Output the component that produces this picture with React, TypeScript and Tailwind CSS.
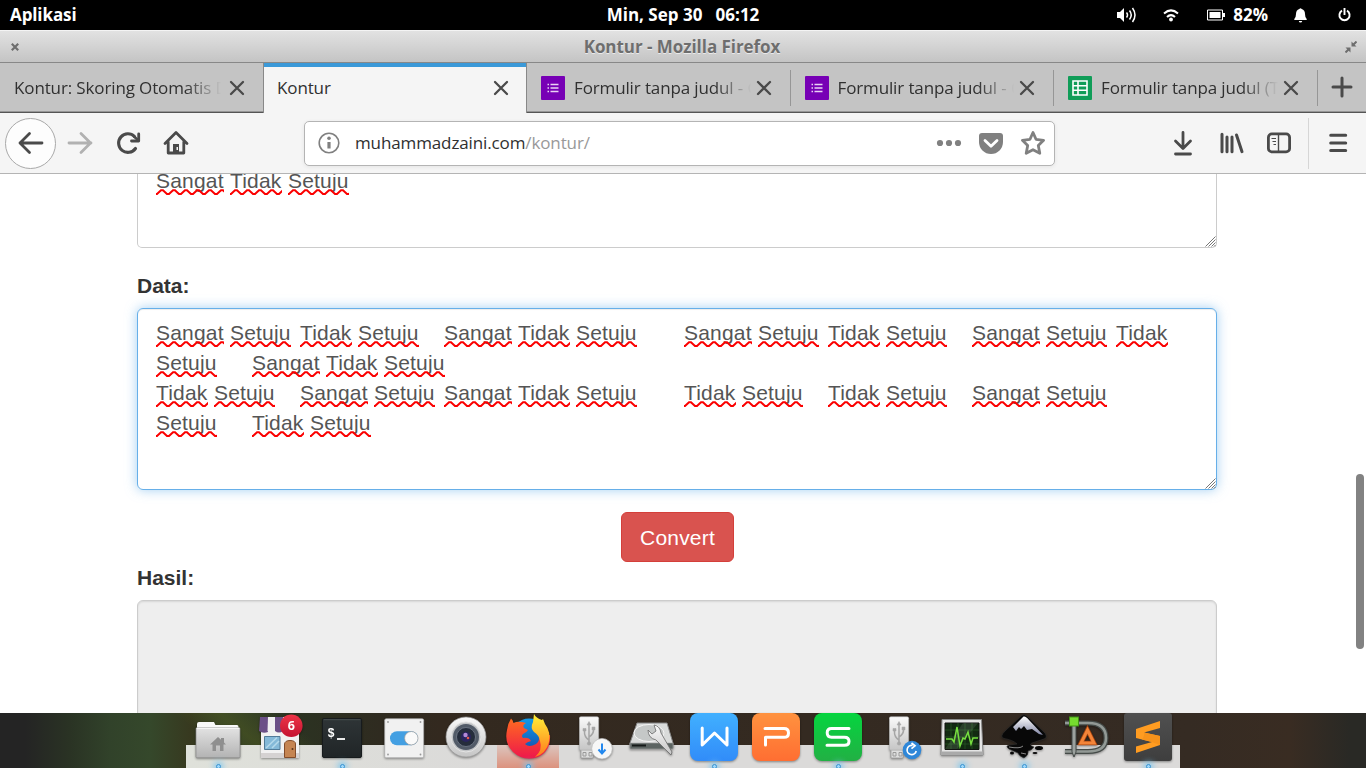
import React from "react";

const WAVE_WIDTH: Record<string, number> = { Sangat: 68, Setuju: 61, Tidak: 52 };

function wave(width: number) {
  let d = "M0 5";
  for (let x = 0; x < width; x += 12) {
    d += `L${x + 1} 5L${x + 5} 1.2L${x + 7} 1.2L${x + 11} 5L${x + 12} 5`;
  }
  return d;
}

function Word({ text }: { text: string }) {
  const w = WAVE_WIDTH[text];
  return (
    <span className="relative inline-block" style={{ width: w }}>
      {text}
      <svg className="absolute top-[23px] left-0" width={w} height="6" fill="none" stroke="#fb0000" strokeWidth="2">
        <path d={wave(w)} />
      </svg>
    </span>
  );
}

function Line({ text }: { text: string }) {
  return (
    <div className="h-[30px] whitespace-pre [tab-size:48px] tracking-[0.2px]">
      {text.split(/([ \t]+)/).map((part, i) =>
        WAVE_WIDTH[part] ? <Word key={i} text={part} /> : (
          <span key={i} className="tracking-[0.16px]">{part}</span>
        )
      )}
    </div>
  );
}

const DATA_LINES = [
  "Sangat Setuju\tTidak Setuju\tSangat Tidak Setuju\tSangat Setuju\tTidak Setuju\tSangat Setuju\tTidak",
  "Setuju\tSangat Tidak Setuju",
  "Tidak Setuju\tSangat Setuju\tSangat Tidak Setuju\tTidak Setuju\tTidak Setuju\tSangat Setuju",
  "Setuju\tTidak Setuju",
];

function Grip() {
  return (
    <svg className="absolute right-0 bottom-0" width="11" height="11" stroke="#777" strokeWidth="1">
      <path d="M0.5 10.5L10.5 0.5M3.5 10.5L10.5 3.5M6.5 10.5L10.5 6.5M9 10.5L10.5 9" />
    </svg>
  );
}

function TopPanel() {
  return (
    <header className="grid h-[30px] shrink-0 grid-cols-3 items-center bg-black pr-[15px] pl-[10px] text-[17px] font-bold text-white">
      <span className="-mt-px tracking-[-0.1px]">Aplikasi</span>
      <span className="-mt-px pl-[5px] text-center whitespace-pre">Min, Sep 30   06:12</span>
      <div className="flex items-center justify-end">
        <svg width="20" height="18" viewBox="0 0 20 18" fill="none" stroke="#fff" strokeWidth="1.5">
          <path d="M0 6H3L7 2V16L3 12H0Z" fill="#fff" stroke="none" />
          <path d="M9.5 6.5Q11.5 9 9.5 11.5M12.5 4.5Q16 9 12.5 13.5M15.5 2Q20.5 9 15.5 16" />
        </svg>
        <svg className="ml-[26px]" width="16" height="13" viewBox="0 0 16 13" fill="none" stroke="#fff" strokeWidth="2">
          <path d="M1 4.5Q8 -1.8 15 4.5M4 8Q8 4.2 12 8" />
          <circle cx="8" cy="10.5" r="1.9" fill="#fff" stroke="none" />
        </svg>
        <svg className="ml-[28px]" width="19" height="12" viewBox="0 0 19 12">
          <path d="M.5 1H15.5V11H.5Z" fill="none" stroke="#fff" />
          <path d="M2.5 3H13.5V9H2.5ZM16 4H18V8H16Z" fill="#fff" />
        </svg>
        <span className="-mt-px ml-[7px]">82%</span>
        <svg className="ml-[26px]" width="13" height="15" viewBox="0 0 13 15" fill="#fff">
          <path d="M5.3 1Q6.5 -.6 7.7 1Q11 2 11 6Q11 9.5 12.7 11V12H.3V11Q2 9.5 2 6Q2 2 5.3 1ZM4.8 13H8.2Q8 14.6 6.5 14.6Q5 14.6 4.8 13Z" />
        </svg>
        <svg className="ml-[31px]" width="13" height="14" viewBox="0 0 13 14" fill="none" stroke="#fff" strokeWidth="1.9">
          <path d="M4 2.7A5.1 5.1 0 1 0 9 2.7M6.5 0V7" />
        </svg>
      </div>
    </header>
  );
}

function Close() {
  return (
    <svg className="shrink-0 overflow-visible" width="14" height="14" viewBox="0 0 14 14" stroke="#4a4a4a" strokeWidth="2.3" strokeLinecap="round">
      <path d="M1 1L13 13M13 1L1 13" />
    </svg>
  );
}

function FormIcon() {
  return (
    <svg className="mr-[9px] shrink-0" width="24" height="24">
      <rect width="24" height="24" rx="1" fill="#7700b5" />
      <path d="M9.5 8.5H17.5M9.5 12H17.5M9.5 15.5H17.5" stroke="#e9d3f4" strokeWidth="1.3" />
      <path d="M6.5 8.5H8M6.5 12H8M6.5 15.5H8" stroke="#e9d3f4" strokeWidth="1.4" />
    </svg>
  );
}

function SheetIcon() {
  return (
    <svg className="mr-[9px] shrink-0" width="24" height="24">
      <rect width="24" height="24" rx="1" fill="#109d58" />
      <path d="M5 5H19V19H5ZM5 9.7H19M5 14.3H19M10 5V19" stroke="#fff" strokeWidth="1.6" fill="none" />
    </svg>
  );
}

function Tab({ title, icon, divider }: { title: string; icon?: React.ReactNode; divider?: boolean }) {
  return (
    <div className={divider ? "flex h-full w-[263.5px] shrink-0 items-center border-b border-[#555] pl-[14px]" : "flex h-full w-[263px] shrink-0 items-center border-b border-[#555] pl-[14px]"}>
      {icon}
      <div className="min-w-0 flex-1 whitespace-nowrap [mask-image:linear-gradient(to_right,#000_calc(100%_-_37px),transparent_calc(100%_-_1px))]">{title}</div>
      <div className={divider ? "ml-[5px] flex h-[36px] w-[34px] items-center" : "ml-[8px] flex h-[36px] w-[33px] items-center"}>
        <Close />
        {divider && <div className="ml-auto h-full w-px bg-[#969696]" />}
      </div>
    </div>
  );
}

function TabStrip() {
  return (
    <div className="flex h-[50px] shrink-0 bg-[#c4c4c4] text-[17px] tracking-[-0.13px] text-[#303030] shadow-[inset_0_-2px_#969696]">
      <Tab title="Kontur: Skoring Otomatis D" />
      <div className="flex h-full w-[264px] shrink-0 items-center border-x border-[#888] bg-[#f5f5f5] pr-[18px] pl-[13px] shadow-[inset_0_4px_#3b99d8]">
        <span className="flex-1">Kontur</span>
        <Close />
      </div>
      <Tab title="Formulir tanpa judul - G" icon={<FormIcon />} divider />
      <Tab title="Formulir tanpa judul - G" icon={<FormIcon />} divider />
      <Tab title="Formulir tanpa judul (T" icon={<SheetIcon />} divider />
      <div className="flex flex-1 items-center border-b border-[#555] pl-[13px]">
        <svg className="-mt-[2px]" width="22" height="22" stroke="#4a4a4a" strokeWidth="3" strokeLinecap="round">
          <path d="M2 11H20M11 2V20" />
        </svg>
      </div>
    </div>
  );
}

function NavBar() {
  return (
    <nav className="flex h-[61px] shrink-0 items-center border-b border-[#b4b4b4] bg-[#f5f5f5] pl-[5px]">
      <div className="flex size-[51px] shrink-0 items-center justify-center rounded-full border border-[#a9a9a9] bg-[#fdfdfd]">
        <svg width="26" height="24" fill="none" stroke="#4a4a4a" strokeWidth="2.8" strokeLinecap="round" strokeLinejoin="round">
          <path d="M24 12H2M11.5 2.5L2 12L11.5 21.5" />
        </svg>
      </div>
      <svg className="ml-[11px]" width="26" height="24" fill="none" stroke="#b1b1b1" strokeWidth="2.8" strokeLinecap="round" strokeLinejoin="round">
        <path d="M2 12H24M14 2.5L23.5 12L14 21.5" />
      </svg>
      <svg className="ml-[23px]" width="26" height="24" fill="none" stroke="#4a4a4a" strokeWidth="3.1" strokeLinecap="round">
        <path d="M19.500 17.500A9.300 9.300 0 1 1 18.500 5.500" />
        <path d="M15.500 10H22.700V3" strokeWidth="2.800" strokeLinejoin="round" />
        <path d="M18 5.500L22.500 9.500" strokeWidth="2.500" />
      </svg>
      <svg className="ml-[21px]" width="26" height="26" fill="none" stroke="#4a4a4a" strokeWidth="2.8" strokeLinecap="round" strokeLinejoin="round">
        <path d="M2 13.5L13 2.5L24 13.5M5.2 12V23H20.8V12" />
        <path d="M10 14H16V23H10Z" fill="#4a4a4a" stroke="none" />
        <path d="M13.500 17H15V20H13.500Z" fill="#f5f5f5" stroke="none" />
      </svg>
      <div className="ml-[115px] flex h-[45px] w-[751px] items-center rounded-[5px] border border-[#b4b4b4] bg-white pr-[8px] pl-[13px] shadow-[0_1px_4px_rgba(0,0,0,0.07)]">
        <svg width="22" height="22" fill="none" stroke="#808080" strokeWidth="1.6">
          <circle cx="11" cy="11" r="9.8" />
          <path d="M11 10V16.5" strokeWidth="3.2" />
          <circle cx="11" cy="6.3" r="1.8" fill="#808080" stroke="none" />
        </svg>
        <span className="ml-[15px] flex-1 text-[17px] tracking-[-0.12px] text-[#303030]">
          muhammadzaini.com<span className="text-[#999]">/kontur/</span>
        </span>
        <svg width="26" height="8" fill="#808080">
          <circle cx="4" cy="4" r="3.1" /><circle cx="13" cy="4" r="3.1" /><circle cx="22" cy="4" r="3.1" />
        </svg>
        <svg className="ml-[17px]" width="24" height="21" viewBox="0 0 24 21">
          <path d="M3 0H21Q24 0 24 3V9A12 12 0 0 1 0 9V3Q0 0 3 0Z" fill="#808080" />
          <path d="M6 7.500L12 13.300L18 7.500" fill="none" stroke="#fff" strokeWidth="2.8" strokeLinecap="round" strokeLinejoin="round" />
        </svg>
        <svg className="ml-[17px]" width="26" height="26" viewBox="0 0 26 26" fill="none" stroke="#808080" strokeWidth="2.8" strokeLinejoin="round">
          <path d="M13 2.5L16 9.300L23.6 10.3L18.300 15.5L19.8 23.3L13 19.700L6.2 23.3L7.700 15.5L2.4 10.3L10 9.3Z" />
        </svg>
      </div>
      <svg className="ml-[118px]" width="20" height="26" fill="none" stroke="#4a4a4a" strokeWidth="2.8" strokeLinecap="round" strokeLinejoin="round">
        <path d="M10 2.5V18M2.5 11L10 18.5L17.5 11M2.5 24H17.5" />
      </svg>
      <svg className="ml-[27px]" width="24" height="22" fill="none" stroke="#4a4a4a" strokeWidth="3" strokeLinecap="round">
        <path d="M2 2.3V19.7M7 5V19.7M12 5V19.7M16.5 3L22 19.7" />
      </svg>
      <svg className="ml-[23px]" width="24" height="22" fill="none" stroke="#4a4a4a">
        <rect x="1.4" y="1.9" width="21.2" height="18" rx="3.5" strokeWidth="2.8" />
        <path d="M11.5 2V20" strokeWidth="1.4" />
        <path d="M4.5 6.5H9M5.5 9.5H9M6.5 12.5H9" strokeWidth="1.2" />
      </svg>
      <div className="ml-[17px] h-[51px] w-px bg-[#d6d6d6]" />
      <svg className="ml-[20px]" width="19" height="20" stroke="#4a4a4a" strokeWidth="3" strokeLinecap="round">
        <path d="M1.700 2.300H16.700M1.700 10H16.700M1.700 17.500H16.700" />
      </svg>
    </nav>
  );
}

function Page() {
  return (
    <main className="relative min-h-0 flex-1 overflow-hidden bg-white px-[137px] font-['Liberation_Sans',sans-serif] text-[21px] leading-[30px] text-[#333]">
      <div className="relative flex h-[74px] w-[1080px] flex-col rounded-b-[5px] border border-t-0 border-[#ccc] px-[18px] text-[#555]">
        <div className="-mt-[8px]"><Line text="Sangat Tidak Setuju" /></div>
        <Grip />
      </div>
      <div className="mt-[23px] mb-[7px] font-bold">Data:</div>
      <div className="relative h-[182px] w-[1080px] rounded-[6px] border border-[#66afe9] px-[18px] py-[9px] text-[#555] shadow-[inset_0_1px_1px_rgba(0,0,0,0.075),0_0_12px_rgba(102,175,233,0.6)]">
        {DATA_LINES.map((line, i) => <Line key={i} text={line} />)}
        <Grip />
      </div>
      <button className="mt-[22px] ml-[484px] block h-[50px] w-[113px] rounded-[6px] border border-[#d43f3a] bg-[#d9534f] pt-[2px] tracking-[0.2px] text-white">Convert</button>
      <div className="mt-[1px] mb-[7px] font-bold">Hasil:</div>
      <div className="h-[182px] w-[1080px] rounded-[6px] border border-[#ccc] bg-[#eee] shadow-[inset_0_1px_2px_rgba(0,0,0,0.1)]" />
      <div className="absolute top-[300px] right-[2px] h-[175px] w-[8px] rounded-full bg-[#828282]" />
    </main>
  );
}

function Usb({ children }: { children: React.ReactNode }) {
  return (
    <>
      <path d="M22 36H34V45H22Z" fill="#dedede" stroke="#999" strokeWidth=".8" />
      <path d="M24 39.5H27V43H24ZM30 39.5H33V43H30Z" fill="#ddd" stroke="#999" />
      <rect x="20.3" y="3.7" width="19.4" height="33.5" rx="1.5" fill="url(#metal)" stroke="#aaa" strokeWidth=".6" />
      <g stroke="#a6a6a6" strokeWidth="1.5" fill="none">
        <path d="M30 11V30M30 27Q25 24 25.5 18M30 24Q35 21 34.5 16" />
        <path d="M30 8.5L32 12H28ZM24 15.5H27V18H24ZM33 14H36V17H33Z" fill="#a6a6a6" strokeWidth=".5" />
        <circle cx="30" cy="30.5" r="1.8" fill="#a6a6a6" strokeWidth=".3" />
      </g>
      {children}
    </>
  );
}

const ICONS: { running?: boolean; active?: boolean; art: React.ReactNode }[] = [
  {
    running: true,
    art: (
      <>
        <path d="M10 17V11Q10 9 12 9H27L28.5 12H50Q51.5 12 51.5 14V17Z" fill="#f8f8f8" />
        <rect x="9" y="14.8" width="44" height="30" rx="1" fill="url(#folder)" stroke="#888" strokeWidth=".7" />
        <path d="M9.5 15.3H52.5" stroke="#fff" />
        <path d="M23 31.5L31 24L34 26.7V25H37V29.5L39 31.5H36.5V38H33V32.5H29V38H25.5V31.5Z" fill="#8f8f8f" />
      </>
    ),
  },
  {
    art: (
      <>
        <path d="M12 17H50V44.7H12Z" fill="#f1f1f1" />
        <path d="M12 40H50V44.7H12Z" fill="#d5d2d2" />
        <path d="M11 4H19V19Q14 21 10 18Z" fill="#6b5087" /><path d="M19 4H26V18Q22 22 18.500 18Z" fill="#f0f0f0" />
        <path d="M26 4H34V18Q30 21 26 18Z" fill="#6b5087" /><path d="M34 4H42V18H34Z" fill="#eee" /><path d="M42 4H49L50 18H42Z" fill="#6b5087" />
        <path d="M15.500 23.500H31V36.500H15.500Z" fill="#84b9d8" stroke="#527b98" />
        <path d="M17 35L28 24.500M23 35L30 28" stroke="#b4d9eb" strokeWidth="1.5" />
        <path d="M35.500 44.500V31Q36 27.500 41 27.500Q46.500 27.500 46.500 31V44.500Z" fill="#c58552" stroke="#834d2b" /><circle cx="43.500" cy="36" r="1" fill="#58341e" />
        <circle cx="42.300" cy="12.700" r="11.300" fill="url(#badge)" />
        <text x="42.300" y="17.200" textAnchor="middle" fill="#fff" fontSize="12.500" fontWeight="700">6</text>
      </>
    ),
  },
  {
    running: true,
    art: (
      <>
        <rect x="11.500" y="5.500" width="39" height="39" rx="1.500" fill="url(#term)" stroke="#171b1d" />
        <path d="M12.500 6.700H49.500" stroke="#5b6265" strokeWidth=".6" />
        <text x="16.500" y="23.500" fill="#fff" fontSize="12" fontWeight="700" className="font-['Liberation_Mono',monospace]">$</text>
        <path d="M26 26H34" stroke="#fff" strokeWidth="1.800" />
      </>
    ),
  },
  {
    art: (
      <>
        <rect x="11.700" y="5.700" width="39" height="39" rx="1.500" fill="#f1f1f1" stroke="#aaa" strokeWidth=".7" />
        <g fill="#999"><circle cx="15" cy="9" r=".9" /><circle cx="47.500" cy="9" r=".9" /><circle cx="15" cy="41.500" r=".9" /><circle cx="47.500" cy="41.500" r=".9" /></g>
        <rect x="17" y="18.200" width="28" height="14" rx="7" fill="#439fe2" />
        <circle cx="38.300" cy="25.200" r="6.700" fill="#fafafa" stroke="#999" strokeWidth=".7" />
      </>
    ),
  },
  {
    art: (
      <>
        <circle cx="31" cy="24" r="20" fill="url(#metal)" stroke="#999" strokeWidth=".7" />
        <circle cx="31" cy="24" r="15" fill="#c2c4c6" stroke="#e4e4e4" />
        <circle cx="31" cy="24" r="13" fill="#525b68" /><circle cx="31" cy="24" r="9.500" fill="#252d3c" stroke="#7b8492" strokeWidth=".7" />
        <circle cx="31" cy="24" r="5" fill="#29245f" /><circle cx="30.500" cy="22" r="2.200" fill="#b18ad6" /><circle cx="33" cy="25" r="1.300" fill="#e6574b" />
      </>
    ),
  },
  {
    running: true,
    active: true,
    art: (
      <>
        <circle cx="32" cy="24" r="18.500" fill="url(#globe)" />
        <path d="M14 5.500Q16 7 16.500 10Q20 8 25 9L29 10Q25 12 27 15L31 17Q30 19 26 21Q24 23 26 25Q32 24 34 28Q30 29 28 31Q32 35 39 31Q43 28 42 23L53 22Q54 38 41 44Q27 49 16 39Q7 30 10 17Q11 10 14 5.500Z" fill="url(#fox)" />
        <path d="M37 1Q39 5 45 7L46 6L48 11Q54 19 52 29Q49 41 38 44Q46 37 43 28Q42 22 37 19Q33 15 36 9Z" fill="url(#flame)" />
      </>
    ),
  },
  {
    art: (
      <Usb>
        <circle cx="43" cy="35.700" r="10.300" fill="#f7f7f7" stroke="#bbb" strokeWidth=".7" />
        <path d="M43 30.500V40M39.500 36.500L43 40.500L46.500 36.500" fill="none" stroke="#2388ee" strokeWidth="2" />
      </Usb>
    ),
  },
  {
    art: (
      <>
        <path d="M16 10H46L52 30V35H9V30Z" fill="#d9dbda" stroke="#868686" />
        <path d="M9 30H52V36H9Z" fill="#5c6462" stroke="#aaa" strokeWidth=".6" />
        <path d="M11 32.500H25" stroke="#151a19" strokeWidth="2" />
        <ellipse cx="28" cy="20" rx="15" ry="8.500" fill="#c5c8c7" stroke="#f4f4f4" />
        <path d="M27 17L31 21L35 18L33 12Q39 13 40 20L51 39L50 42L35 27Q27 25 27 17Z" fill="url(#metal)" stroke="#6b6b6b" strokeWidth=".8" />
      </>
    ),
  },
  {
    running: true,
    art: (
      <>
        <rect x="7" width="48" height="48" rx="8" fill="url(#wblue)" />
        <path d="M19.200 15V32L31.500 20L44 32V15" fill="none" stroke="#fff" strokeWidth="3" strokeLinecap="round" strokeLinejoin="round" />
      </>
    ),
  },
  {
    art: (
      <>
        <rect x="7" width="48" height="48" rx="8" fill="url(#porange)" />
        <path d="M20 15.500H39Q43.500 15.500 43.500 19.900Q43.500 24.300 39 24.300H20.500V32" fill="none" stroke="#fff" strokeWidth="3" strokeLinecap="round" strokeLinejoin="round" />
      </>
    ),
  },
  {
    running: true,
    art: (
      <>
        <rect x="7" width="48" height="48" rx="8" fill="url(#sgreen)" />
        <path d="M42 15.500H24.500Q20.200 15.500 20.200 19.800Q20.200 24.200 24.500 24.200H37.500Q42 24.200 42 28.300Q42 32.300 37.500 32.300H20" fill="none" stroke="#fff" strokeWidth="3" strokeLinecap="round" />
      </>
    ),
  },
  {
    art: (
      <Usb>
        <circle cx="43" cy="37" r="9.300" fill="#2f87d8" />
        <path d="M47.200 38A4.600 4.600 0 1 1 43.500 32.500M42.500 30L46 32.800L42.500 35.600" fill="none" stroke="#fff" strokeWidth="1.700" />
      </Usb>
    ),
  },
  {
    running: true,
    art: (
      <>
        <path d="M10 42L11 6.500H50.500L52 42Z" fill="#e5e5e5" stroke="#888" />
        <path d="M10 38.500H52V42H10Z" fill="#aaa" />
        <path d="M14 10H48V36.500H14Z" fill="#122a12" stroke="#111" />
        <path d="M14 17H48M14 24H48M14 31H48M20 10V36M27 10V36M34 10V36M41 10V36" stroke="#285926" strokeWidth=".7" />
        <path d="M32 10H47L26 36H14Z" fill="#fff" opacity=".1" />
        <path d="M15 26H21L23 29L26 14L29 33L32 25L34 26L37 19L40 31L42 25H47" fill="none" stroke="#76df3f" strokeWidth="1.500" />
      </>
    ),
  },
  {
    running: true,
    art: (
      <>
        <path d="M31 1.500Q33 2 36 5L52 20Q55 25 51 26L39 30Q35 32 41 34Q39 37 35 38Q36 42 31 45Q26 43 25 40L16 36Q12 33 16 32L24 31Q20 27 11 25.500Q6 24 12 18L26 5Q29 2 31 1.500Z" fill="#080808" stroke="#333" strokeWidth=".6" />
        <path d="M30.500 3.500L20 14L23 18L26 14L28 16L31 13L34 17L39 16L46 21L50 22L36 7Q33 3 30.500 3.500Z" fill="url(#peak)" />
        <path d="M16 34Q27 36 30 33M28 40L33 41" stroke="#888" strokeWidth="1" fill="none" />
        <ellipse cx="46" cy="35" rx="4" ry="2" fill="#080808" /><ellipse cx="19" cy="40" rx="2" ry="1.500" fill="#080808" /><ellipse cx="42" cy="40" rx="2.500" ry="1" fill="#080808" />
      </>
    ),
  },
  {
    art: (
      <>
        <path d="M10 10H33Q51 10 51 25Q51 38.500 33 38.500H10" fill="none" stroke="#454b48" strokeWidth="5" />
        <path d="M10 10H33Q51 10 51 25Q51 38.500 33 38.500H10" fill="none" stroke="#929995" strokeWidth="2.600" />
        <path d="M17 10H21V39L19 44L17 39Z" fill="#9ba19e" stroke="#454b48" />
        <path d="M32.500 17L39 30H26Z" fill="none" stroke="#a84510" strokeWidth="4.600" />
        <path d="M32.500 17L39 30H26Z" fill="none" stroke="#f48539" strokeWidth="3" />
        <rect x="14.500" y="4" width="9" height="9" fill="#76dc2f" stroke="#429316" />
      </>
    ),
  },
  {
    running: true,
    art: (
      <>
        <rect x="7" width="48" height="48" rx="3" fill="url(#subl)" />
        <path d="M43 8L19 16V25L35 29L19 33.500V40L43 32V23L27 19.500L43 15Z" fill="#ff9c21" />
        <path d="M27 19.500L43 23V32L35 29L25 26.500Q28 22 27 19.500Z" fill="#f7931b" />
      </>
    ),
  },
];

function Gradient({ id, from, to }: { id: string; from: string; to: string }) {
  return (
    <linearGradient id={id} x1="0" y1="0" x2="0" y2="1">
      <stop stopColor={from} />
      <stop offset="1" stopColor={to} />
    </linearGradient>
  );
}

function Dock() {
  return (
    <footer className="relative flex h-[55px] shrink-0 justify-center bg-[linear-gradient(38deg,transparent_150px,rgba(76,88,30,0.55)_178px,transparent_215px),linear-gradient(90deg,#242424_25px,#2a3324_70px,#31422a_110px,#35482b_150px,#37391f_190px,#34412a_225px,#2b3322_290px,#2f2b20_380px,#33291f_440px,#352b23_1190px,#392c22_1290px,#292925_1350px)]">
      <svg className="absolute" width="0" height="0">
        <defs>
          <Gradient id="metal" from="#fafafa" to="#c5c5c5" />
          <Gradient id="folder" from="#e2e2e2" to="#b3b3b3" />
          <Gradient id="badge" from="#ee3548" to="#c41331" />
          <Gradient id="term" from="#2e3436" to="#202527" />
          <Gradient id="globe" from="#109bea" to="#1747a5" />
          <Gradient id="fox" from="#ff6b20" to="#ee174b" />
          <Gradient id="flame" from="#fff237" to="#ff791d" />
          <Gradient id="wblue" from="#41b0ff" to="#318cf9" />
          <Gradient id="porange" from="#ff923f" to="#ff6e32" />
          <Gradient id="sgreen" from="#05d53f" to="#22b044" />
          <Gradient id="subl" from="#505050" to="#3e3e3e" />
          <Gradient id="peak" from="#ffffff" to="#8286a5" />
        </defs>
      </svg>
      <div className="flex w-[994px] bg-[linear-gradient(90deg,#dfe1da,#dbdad9_30%)] bg-[size:100%_23px] bg-bottom bg-no-repeat px-px">
        {ICONS.map(({ running, active, art }, i) => (
          <div key={i} className={active ? "h-full w-[62px] bg-[linear-gradient(transparent_32px,#dcc5be_32px,#dc927e)]" : "h-full w-[62px]"}>
            <svg className="overflow-visible drop-shadow-[0_1px_1px_rgba(0,0,0,0.4)]" width="62" height="55" viewBox="0 0 62 55">
              {art}
            </svg>
            {running && (
              <div className="relative -mt-[5px] flex h-[5px] justify-center">
                <div className="mt-px size-[5px] rounded-full border border-[#3992d0] bg-[#9ed8fb] shadow-[0_0_6px_2px_#79c6ef]" />
              </div>
            )}
          </div>
        ))}
      </div>
    </footer>
  );
}

export default function App() {
  return (
    <div className="flex h-[768px] w-[1366px] flex-col overflow-hidden bg-white font-['Open_Sans',sans-serif]">
      <TopPanel />
      <div className="flex h-[33px] shrink-0 items-center border-t border-b border-t-[#f4f4f4] border-b-[#888] bg-linear-to-b from-[#e2e2e2] to-[#c4c4c4] pr-[9px] pl-[11px]">
        <svg width="8" height="8" stroke="#6e6e6e" strokeWidth="2.2"><path d="M.8 .8L7.200 7.200M7.200 .8L.8 7.200" /></svg>
        <div className="flex-1 text-center text-[17px] font-bold tracking-[-0.05px] text-[#6e6e6e] [text-shadow:0_1px_rgba(255,255,255,0.6)]">Kontur - Mozilla Firefox</div>
        <svg width="12" height="12" fill="#6e6e6e" stroke="#6e6e6e">
          <path d="M6.500 .5V5.500H11.500ZM5.500 11.500V6.500H.5Z" stroke="none" />
          <path d="M11.500 .5L8 4M.5 11.500L4 8" strokeWidth="2" />
        </svg>
      </div>
      <TabStrip />
      <NavBar />
      <Page />
      <Dock />
    </div>
  );
}
